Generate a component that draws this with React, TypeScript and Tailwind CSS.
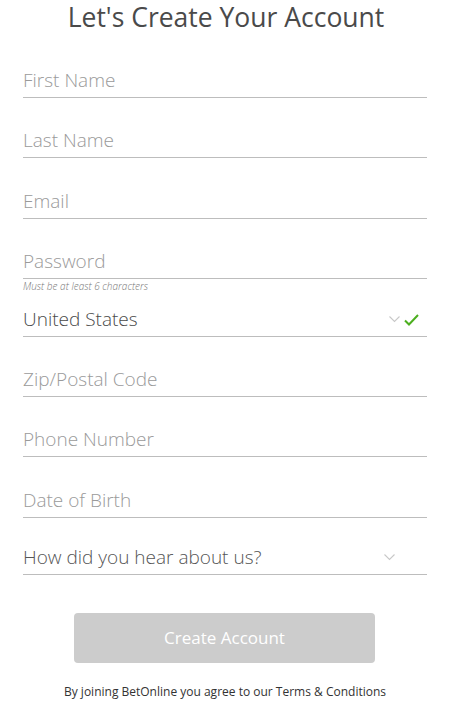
const font = { fontFamily: '"Open Sans", "Liberation Sans", sans-serif' };

const Chevron = () => (
  <svg width="11" height="7" viewBox="0 0 11 7">
    <path d="M0.5 0.5 L5.5 5.5 L10.5 0.5" fill="none" stroke="#c8c8c8" strokeWidth="1.1" />
  </svg>
);

const Check = () => (
  <svg width="15" height="12" viewBox="0 0 15 12">
    <path d="M1 6.5 L5 10.5 L14 1" fill="none" stroke="#4caf1f" strokeWidth="2" />
  </svg>
);

const Field = ({ label, h = "h-[60px]" }: { label: string; h?: string }) => (
  <div className={`${h} flex items-end`}>
    <div className="w-full h-[34px] flex items-center border-b border-[#bdbdbd] text-[19px] font-light text-[#9a9a9a]">
      {label}
    </div>
  </div>
);

export default function App() {
  return (
    <div className="w-[453px] h-[720px] bg-white" style={font}>
      <h1 className="h-[38px] text-center text-[26.5px] leading-[34px] text-[#4a4a4a] pr-[1px]">
        Let's Create Your Account
      </h1>
      <div className="px-[23px] w-[450px]">
        <Field label="First Name" />
        <Field label="Last Name" />
        <Field label="Email" h="h-[61px]" />
        <Field label="Password" />
        <div className="h-[12px] text-[10px] italic font-light text-[#777] leading-[14px]">
          Must be at least 6 characters
        </div>
        <div className="h-[46px] flex items-end">
          <div className="w-full h-[34px] flex items-center justify-between border-b border-[#bdbdbd] text-[19px] font-light text-[#4a4a4a]">
            <span>United States</span>
            <span className="flex items-center gap-[4px] pr-[8px]">
              <Chevron />
              <Check />
            </span>
          </div>
        </div>
        <Field label="Zip/Postal Code" />
        <Field label="Phone Number" />
        <Field label="Date of Birth" h="h-[61px]" />
        <div className="h-[57px] flex items-end">
          <div className="w-full h-[34px] flex items-center justify-between border-b border-[#bdbdbd] text-[19px] font-light text-[#555]">
            <span>How did you hear about us?</span>
            <span className="pr-[32px]">
              <Chevron />
            </span>
          </div>
        </div>
      </div>
      <div className="pl-[74px] mt-[38px]">
        <button className="w-[301px] h-[50px] rounded-[4px] bg-[#cccccc] text-white text-[17px]">
          Create Account
        </button>
      </div>
      <p className="mt-[20px] text-center text-[12px] text-[#333] pr-[3px]">
        By joining BetOnline you agree to our Terms &amp; Conditions
      </p>
    </div>
  );
}
